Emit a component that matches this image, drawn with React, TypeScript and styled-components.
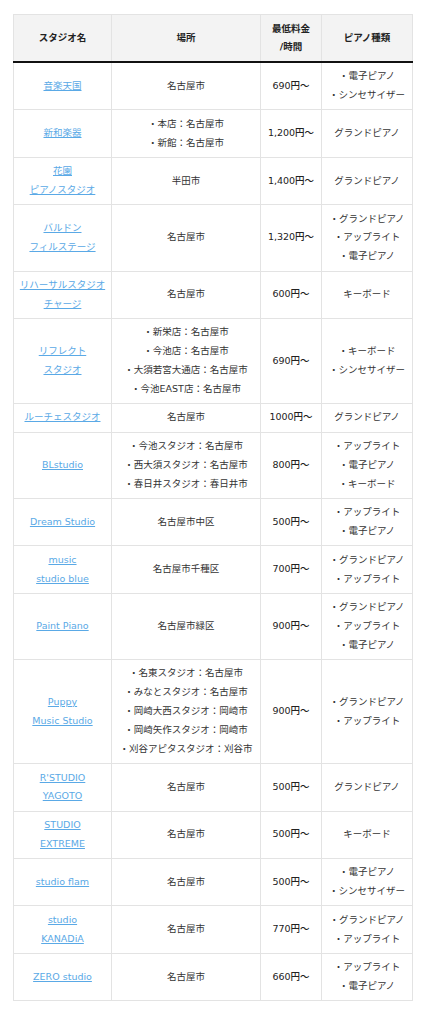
import * as React from "react";
import styled, { createGlobalStyle } from "styled-components";

type Studio = {
  name: string[];
  place: string[];
  price: string;
  piano: string[];
};

const studios: Studio[] = [
  { name: ["音楽天国"], place: ["名古屋市"], price: "690円〜", piano: ["・電子ピアノ", "・シンセサイザー"] },
  { name: ["新和楽器"], place: ["・本店：名古屋市", "・新館：名古屋市"], price: "1,200円〜", piano: ["グランドピアノ"] },
  { name: ["花園", "ピアノスタジオ"], place: ["半田市"], price: "1,400円〜", piano: ["グランドピアノ"] },
  { name: ["バルドン", "フィルステージ"], place: ["名古屋市"], price: "1,320円〜", piano: ["・グランドピアノ", "・アップライト", "・電子ピアノ"] },
  { name: ["リハーサルスタジオ", "チャージ"], place: ["名古屋市"], price: "600円〜", piano: ["キーボード"] },
  {
    name: ["リフレクト", "スタジオ"],
    place: ["・新栄店：名古屋市", "・今池店：名古屋市", "・大須若宮大通店：名古屋市", "・今池EAST店：名古屋市"],
    price: "690円〜",
    piano: ["・キーボード", "・シンセサイザー"],
  },
  { name: ["ルーチェスタジオ"], place: ["名古屋市"], price: "1000円〜", piano: ["グランドピアノ"] },
  {
    name: ["BLstudio"],
    place: ["・今池スタジオ：名古屋市", "・西大須スタジオ：名古屋市", "・春日井スタジオ：春日井市"],
    price: "800円〜",
    piano: ["・アップライト", "・電子ピアノ", "・キーボード"],
  },
  { name: ["Dream Studio"], place: ["名古屋市中区"], price: "500円〜", piano: ["・アップライト", "・電子ピアノ"] },
  { name: ["music", "studio blue"], place: ["名古屋市千種区"], price: "700円〜", piano: ["・グランドピアノ", "・アップライト"] },
  { name: ["Paint Piano"], place: ["名古屋市緑区"], price: "900円〜", piano: ["・グランドピアノ", "・アップライト", "・電子ピアノ"] },
  {
    name: ["Puppy", "Music Studio"],
    place: [
      "・名東スタジオ：名古屋市",
      "・みなとスタジオ：名古屋市",
      "・岡崎大西スタジオ：岡崎市",
      "・岡崎矢作スタジオ：岡崎市",
      "・刈谷アピタスタジオ：刈谷市",
    ],
    price: "900円〜",
    piano: ["・グランドピアノ", "・アップライト"],
  },
  { name: ["R'STUDIO", "YAGOTO"], place: ["名古屋市"], price: "500円〜", piano: ["グランドピアノ"] },
  { name: ["STUDIO", "EXTREME"], place: ["名古屋市"], price: "500円〜", piano: ["キーボード"] },
  { name: ["studio flam"], place: ["名古屋市"], price: "500円〜", piano: ["・電子ピアノ", "・シンセサイザー"] },
  { name: ["studio", "KANADiA"], place: ["名古屋市"], price: "770円〜", piano: ["・グランドピアノ", "・アップライト"] },
  { name: ["ZERO studio"], place: ["名古屋市"], price: "660円〜", piano: ["・アップライト", "・電子ピアノ"] },
];

const GlobalStyle = createGlobalStyle`
  body {
    margin: 0;
    background: #fff;
    font-family: "DejaVu Sans", "Noto Sans CJK JP", sans-serif;
    color: #333;
  }
`;

const Lines = ({ items }: { items: string[] }) => (
  <>
    {items.map((t, i) => (
      <React.Fragment key={i}>
        {i > 0 && <br />}
        {t}
      </React.Fragment>
    ))}
  </>
);

const App = () => {
  return (
    <>
      <GlobalStyle />
      <S.Page>
        <S.Table>
          <colgroup>
            <col style={{ width: "98px" }} />
            <col style={{ width: "149px" }} />
            <col style={{ width: "61px" }} />
            <col style={{ width: "91px" }} />
          </colgroup>
          <thead>
            <tr>
              <S.Head>スタジオ名</S.Head>
              <S.Head>場所</S.Head>
              <S.Head>
                最低料金
                <br />
                /時間
              </S.Head>
              <S.Head>ピアノ種類</S.Head>
            </tr>
          </thead>
          <tbody>
            {studios.map((s, i) => (
              <tr key={i}>
                <S.Cell>
                  <S.Link href="#">
                    <Lines items={s.name} />
                  </S.Link>
                </S.Cell>
                <S.Cell>
                  <Lines items={s.place} />
                </S.Cell>
                <S.Cell $price>{s.price}</S.Cell>
                <S.Cell>
                  <Lines items={s.piano} />
                </S.Cell>
              </tr>
            ))}
          </tbody>
        </S.Table>
      </S.Page>
    </>
  );
};

const S = {
  Page: styled.div`
    padding: 14px 13px 20px 13px;
  `,
  Table: styled.table`
    width: 399px;
    border-collapse: collapse;
    table-layout: fixed;
    font-size: 9.5px;
    line-height: 18.9px;
    border: 1px solid #e3e3e3;
  `,
  Head: styled.th`
    background: #f3f3f3;
    border: 1px solid #e3e3e3;
    border-bottom: 2px solid #111;
    padding: 5px 2px;
    line-height: 18px;
    font-weight: bold;
    color: #222;
    text-align: center;
    vertical-align: middle;
    height: 36px;
  `,
  Cell: styled.td<{ $price?: boolean }>`
    border: 1px solid #e3e3e3;
    padding: 4.3px 2px;
    text-align: center;
    vertical-align: middle;
    white-space: nowrap;
    color: ${(p) => (p.$price ? "#222" : "#333")};
    font-weight: ${(p) => (p.$price ? 500 : "normal")};
  `,
  Link: styled.a`
    color: #5aa9e6;
    text-decoration: underline;
  `,
};

export default App;
